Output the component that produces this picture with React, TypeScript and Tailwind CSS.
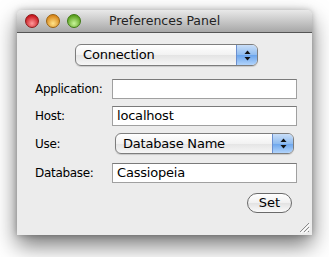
import React from "react"

const font = { fontFamily: '"DejaVu Sans", "Liberation Sans", sans-serif' }

function Light({ from, to, border }: { from: string; to: string; border: string }) {
  return (
    <span
      className="block w-[14px] h-[14px] rounded-full border"
      style={{ background: `radial-gradient(circle at 50% 70%, ${to} 0%, ${from} 75%)`, borderColor: border }}
    />
  )
}

function Arrows() {
  return (
    <div className="w-[21px] h-full flex items-center justify-center rounded-r-[5px] border-l border-[#6b8fcf] bg-[linear-gradient(#c9def8,#8fbcf0_50%,#6aa4ec_51%,#b2d4fb)]">
      <svg width="7" height="11" viewBox="0 0 7 11">
        <path d="M3.5 0.5 L6.5 4 H0.5 Z" fill="#111" />
        <path d="M3.5 10.5 L6.5 7 H0.5 Z" fill="#111" />
      </svg>
    </div>
  )
}

function Popup({ label, className }: { label: string; className: string }) {
  return (
    <div className={`flex items-stretch rounded-[6px] border border-[#7d7d7d] bg-[linear-gradient(#ffffff,#f2f2f2_50%,#e4e4e4_51%,#f6f6f6)] shadow-[0_1px_1px_rgba(0,0,0,0.15)] ${className}`}>
      <span className="flex-1 pl-[7px] text-[13px] tracking-[-0.2px] leading-[20px] text-black">{label}</span>
      <Arrows />
    </div>
  )
}

function Field({ value }: { value?: string }) {
  return (
    <div className="w-[185px] h-[20px] bg-white border border-[#a0a0a0] border-t-[#7a7a7a] pl-[4px] text-[13px] tracking-[-0.2px] leading-[18px] text-black">
      {value}
    </div>
  )
}

function Label({ children }: { children: React.ReactNode }) {
  return <span className="w-[77px] text-[12px] tracking-[-0.3px] text-black">{children}</span>
}

export default function App() {
  return (
    <div className="w-[329px] h-[257px] bg-white pl-[17px] pt-[10px]" style={font}>
      <div className="relative w-[295px] h-[225px] bg-[#ececec] rounded-t-[5px] shadow-[0_10px_22px_rgba(0,0,0,0.55),0_0_6px_rgba(0,0,0,0.25)] flex flex-col">
        <div className="h-[23px] flex items-center rounded-t-[5px] border-b border-[#555] bg-[linear-gradient(#e9e9e9,#a7a7a7)] relative">
          <div className="flex gap-[7px] pl-[8px]">
            <Light from="#c8161d" to="#ff9a9a" border="#8a1a1a" />
            <Light from="#d8861a" to="#ffe48a" border="#9a6310" />
            <Light from="#5aa01d" to="#c8f59a" border="#3f7a14" />
          </div>
          <span className="absolute inset-x-0 text-center text-[12.5px] text-[#222]">Preferences Panel</span>
        </div>

        <div className="flex flex-col pl-[18px]">
          <Popup label="Connection" className="ml-[40px] mt-[11px] w-[183px] h-[22px]" />
          <div className="flex items-center mt-[13px]">
            <Label>Application:</Label>
            <Field />
          </div>
          <div className="flex items-center mt-[7px]">
            <Label>Host:</Label>
            <Field value="localhost" />
          </div>
          <div className="flex items-center mt-[7px]">
            <Label>Use:</Label>
            <Popup label="Database Name" className="ml-[3px] w-[179px] h-[21px]" />
          </div>
          <div className="flex items-center mt-[9px]">
            <Label>Database:</Label>
            <Field value="Cassiopeia" />
          </div>
          <div className="flex justify-end mt-[10px] pr-[20px]">
            <button className="w-[45px] h-[20px] rounded-full border border-[#6a6a6a] bg-[linear-gradient(#ffffff,#f0f0f0_50%,#e2e2e2_51%,#fafafa)] text-[13px] leading-[18px] text-black">
              Set
            </button>
          </div>
        </div>

        <svg className="absolute right-[2px] bottom-[2px]" width="11" height="11" viewBox="0 0 11 11">
          <path d="M10 1 L1 10 M10 5 L5 10 M10 9 L9 10" stroke="#8a8a8a" strokeWidth="1" />
          <path d="M11 2 L2 11 M11 6 L6 11" stroke="#fff" strokeWidth="1" />
        </svg>
      </div>
    </div>
  )
}
